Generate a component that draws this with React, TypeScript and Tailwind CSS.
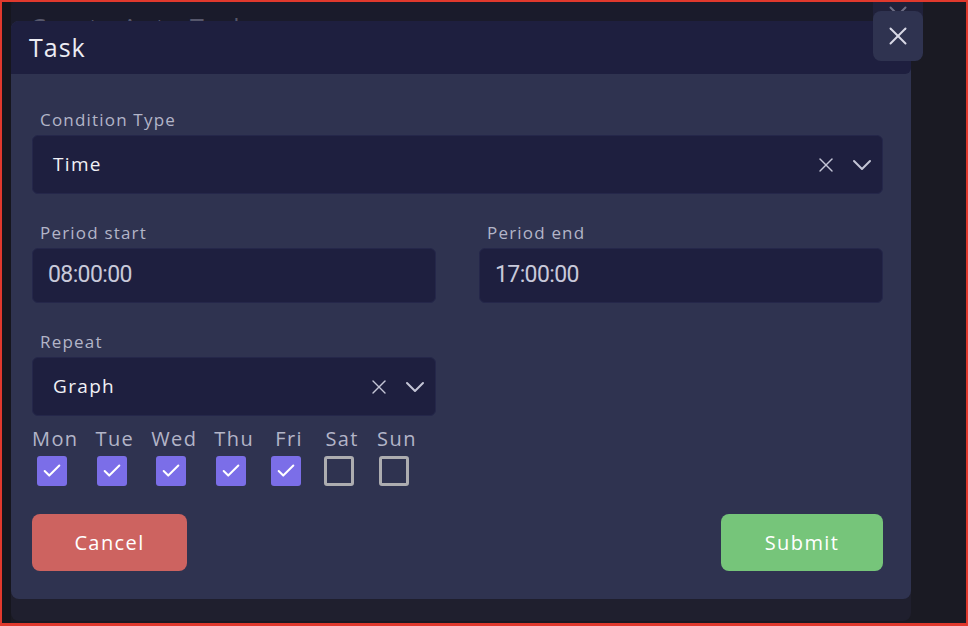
import { X, ChevronDown, Check } from "lucide-react"

const days = [
  { name: "Mon", on: true },
  { name: "Tue", on: true },
  { name: "Wed", on: true },
  { name: "Thu", on: true },
  { name: "Fri", on: true },
  { name: "Sat", on: false },
  { name: "Sun", on: false },
]

function Select({ value }: { value: string }) {
  return (
    <div className="flex h-[59px] items-center rounded-md border border-[#25274a] bg-[#1e1f3f] pl-5 pr-[4px]">
      <span className="flex-1 text-[19px] tracking-[0.07em] text-[#f1f1f6]">{value}</span>
      <X size={24} strokeWidth={1.4} className="mr-[8px] text-[#c4c5d6]" />
      <ChevronDown size={32} strokeWidth={1.5} className="text-[#c4c5d6]" />
    </div>
  )
}

function TimeInput({ value }: { value: string }) {
  return (
    <div className="flex h-[55px] items-center rounded-md border border-[#25274a] bg-[#1e1f3f] px-[15px]">
      <span
        className="text-[23px] tracking-[-0.6px] text-[#c8c9da]"
        style={{ fontFamily: "Roboto, sans-serif" }}
      >
        {value}
      </span>
    </div>
  )
}

function Label({ children }: { children: string }) {
  return (
    <div className="mb-[5px] pl-2 text-[17px] leading-[20px] tracking-[0.07em] text-[#b3b5c8]">{children}</div>
  )
}

export default function App() {
  return (
    <div
      className="relative h-[626px] w-[968px] overflow-hidden border-2 border-b-[3px] border-[#e0392d] bg-[#1a1a23]"
      style={{ fontFamily: "'Open Sans', sans-serif" }}
    >
      <div className="absolute inset-y-0 left-0 w-[9px] bg-[#16161e]" />

      {/* Modal behind */}
      <div className="absolute left-[9px] top-[-2px] flex h-[621px] w-[900px] flex-col overflow-hidden rounded-lg bg-[#1f1f2e]">
        <div className="flex h-[53px] items-center bg-[#1a1b2b] px-[19px] pt-[2px] text-[25px] tracking-[0.05em] text-[#56576b]">
          Create Auto Task
        </div>
      </div>
      <div className="absolute left-[871px] top-[-12px] flex h-[50px] w-[50px] items-center justify-center rounded-lg bg-[#20213a] text-[#6d6e86]">
        <X size={30} strokeWidth={1.6} />
      </div>

      {/* Modal */}
      <div className="absolute left-[9px] top-[19px] w-[900px] overflow-hidden rounded-lg bg-[#2f3350]">
        <div className="flex h-[53px] items-center rounded-br-md bg-[#1e1f3f] px-[18px] text-[25px] font-medium tracking-[0.04em] text-[#ececf3]">
          Task
        </div>

        <div className="pb-[28px] pl-[21px] pr-[28px] pt-[36px]">
          <Label>Condition Type</Label>
          <Select value="Time" />

          <div className="mt-[29px] grid grid-cols-2 gap-[43px]">
            <div>
              <Label>Period start</Label>
              <TimeInput value="08:00:00" />
            </div>
            <div>
              <Label>Period end</Label>
              <TimeInput value="17:00:00" />
            </div>
          </div>

          <div className="mt-[29px] w-[404px]">
            <Label>Repeat</Label>
            <Select value="Graph" />
          </div>

          <div className="mt-[10px] flex gap-[17px]">
            {days.map(d => (
              <div key={d.name} className="flex flex-col items-center">
                <span className="text-[20px] leading-[26px] tracking-[0.07em] text-[#b3b5c8]">{d.name}</span>
                <div className="mr-[6px] mt-[4px]">
                  {d.on ? (
                    <div className="flex h-[30px] w-[30px] items-center justify-center rounded-[3px] bg-[#7b6ee8] text-white">
                      <Check size={22} strokeWidth={2.2} />
                    </div>
                  ) : (
                    <div className="h-[30px] w-[30px] rounded-[3px] border-[3px] border-[#adadb0]" />
                  )}
                </div>
              </div>
            ))}
          </div>

          <div className="mt-[28px] flex justify-between">
            <button className="h-[57px] w-[155px] rounded-lg bg-[#cd6360] text-[20px] tracking-[0.07em] text-white">
              Cancel
            </button>
            <button className="h-[57px] w-[162px] rounded-lg bg-[#76c57a] text-[20px] tracking-[0.07em] text-white">
              Submit
            </button>
          </div>
        </div>
      </div>

      <button className="absolute left-[871px] top-[9px] flex h-[50px] w-[50px] items-center justify-center rounded-lg bg-[#2f3350] text-[#d8d9e6]">
        <X size={30} strokeWidth={1.6} />
      </button>
    </div>
  )
}
